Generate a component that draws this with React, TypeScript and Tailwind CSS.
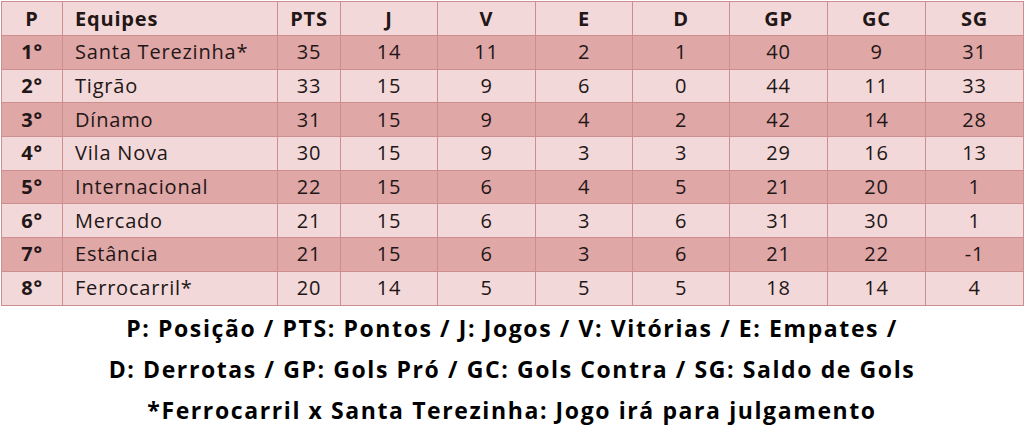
import React from 'react';

type Row = { pos: string; team: string; stats: number[] };

const rows: Row[] = [
  { pos: '1°', team: 'Santa Terezinha*', stats: [35, 14, 11, 2, 1, 40, 9, 31] },
  { pos: '2°', team: 'Tigrão', stats: [33, 15, 9, 6, 0, 44, 11, 33] },
  { pos: '3°', team: 'Dínamo', stats: [31, 15, 9, 4, 2, 42, 14, 28] },
  { pos: '4°', team: 'Vila Nova', stats: [30, 15, 9, 3, 3, 29, 16, 13] },
  { pos: '5°', team: 'Internacional', stats: [22, 15, 6, 4, 5, 21, 20, 1] },
  { pos: '6°', team: 'Mercado', stats: [21, 15, 6, 3, 6, 31, 30, 1] },
  { pos: '7°', team: 'Estância', stats: [21, 15, 6, 3, 6, 21, 22, -1] },
  { pos: '8°', team: 'Ferrocarril*', stats: [20, 14, 5, 5, 5, 18, 14, 4] },
];

const headers = ['PTS', 'J', 'V', 'E', 'D', 'GP', 'GC', 'SG'];
const widths = ['w-[61px]', 'w-[215px]', 'w-[63px]', 'w-[97px]', 'w-[98px]', 'w-[97px]', 'w-[97px]', 'w-[98px]', 'w-[98px]', 'w-[98px]'];

export default function App() {
  return (
    <div className="w-[1024px] h-[428px] bg-white overflow-hidden font-['Open_Sans',sans-serif] text-[#221616]">
      <div className="pl-px pt-px">
        <table className="table-fixed border-collapse text-[20px] tracking-[0.8px]">
          <colgroup>
            {widths.map((w, i) => (
              <col key={i} className={w} />
            ))}
          </colgroup>
          <thead>
            <tr className="h-[34px] bg-[#f2d8d8]">
              <th className="border border-[#cc8e8e] font-bold text-center">P</th>
              <th className="border border-[#cc8e8e] font-bold text-left pl-[12px]">Equipes</th>
              {headers.map((h) => (
                <th key={h} className="border border-[#cc8e8e] font-bold text-center">
                  {h}
                </th>
              ))}
            </tr>
          </thead>
          <tbody>
            {rows.map((r, i) => (
              <tr key={r.pos} className={`h-[33.7px] ${i % 2 === 0 ? 'bg-[#e0a7a7]' : 'bg-[#f2d8d8]'}`}>
                <td className="border border-[#cc8e8e] font-bold text-center">{r.pos}</td>
                <td className="border border-[#cc8e8e] text-left pl-[12px]">{r.team}</td>
                {r.stats.map((s, j) => (
                  <td key={j} className="border border-[#cc8e8e] text-center">
                    {s}
                  </td>
                ))}
              </tr>
            ))}
          </tbody>
        </table>
      </div>
      <div className="flex flex-col items-center pt-[2px] font-bold text-[23px] tracking-[1.6px] leading-[41px] text-black">
        <p>P: Posição / PTS: Pontos / J: Jogos / V: Vitórias / E: Empates /</p>
        <p>D: Derrotas / GP: Gols Pró / GC: Gols Contra / SG: Saldo de Gols</p>
        <p>*Ferrocarril x Santa Terezinha: Jogo irá para julgamento</p>
      </div>
    </div>
  );
}
